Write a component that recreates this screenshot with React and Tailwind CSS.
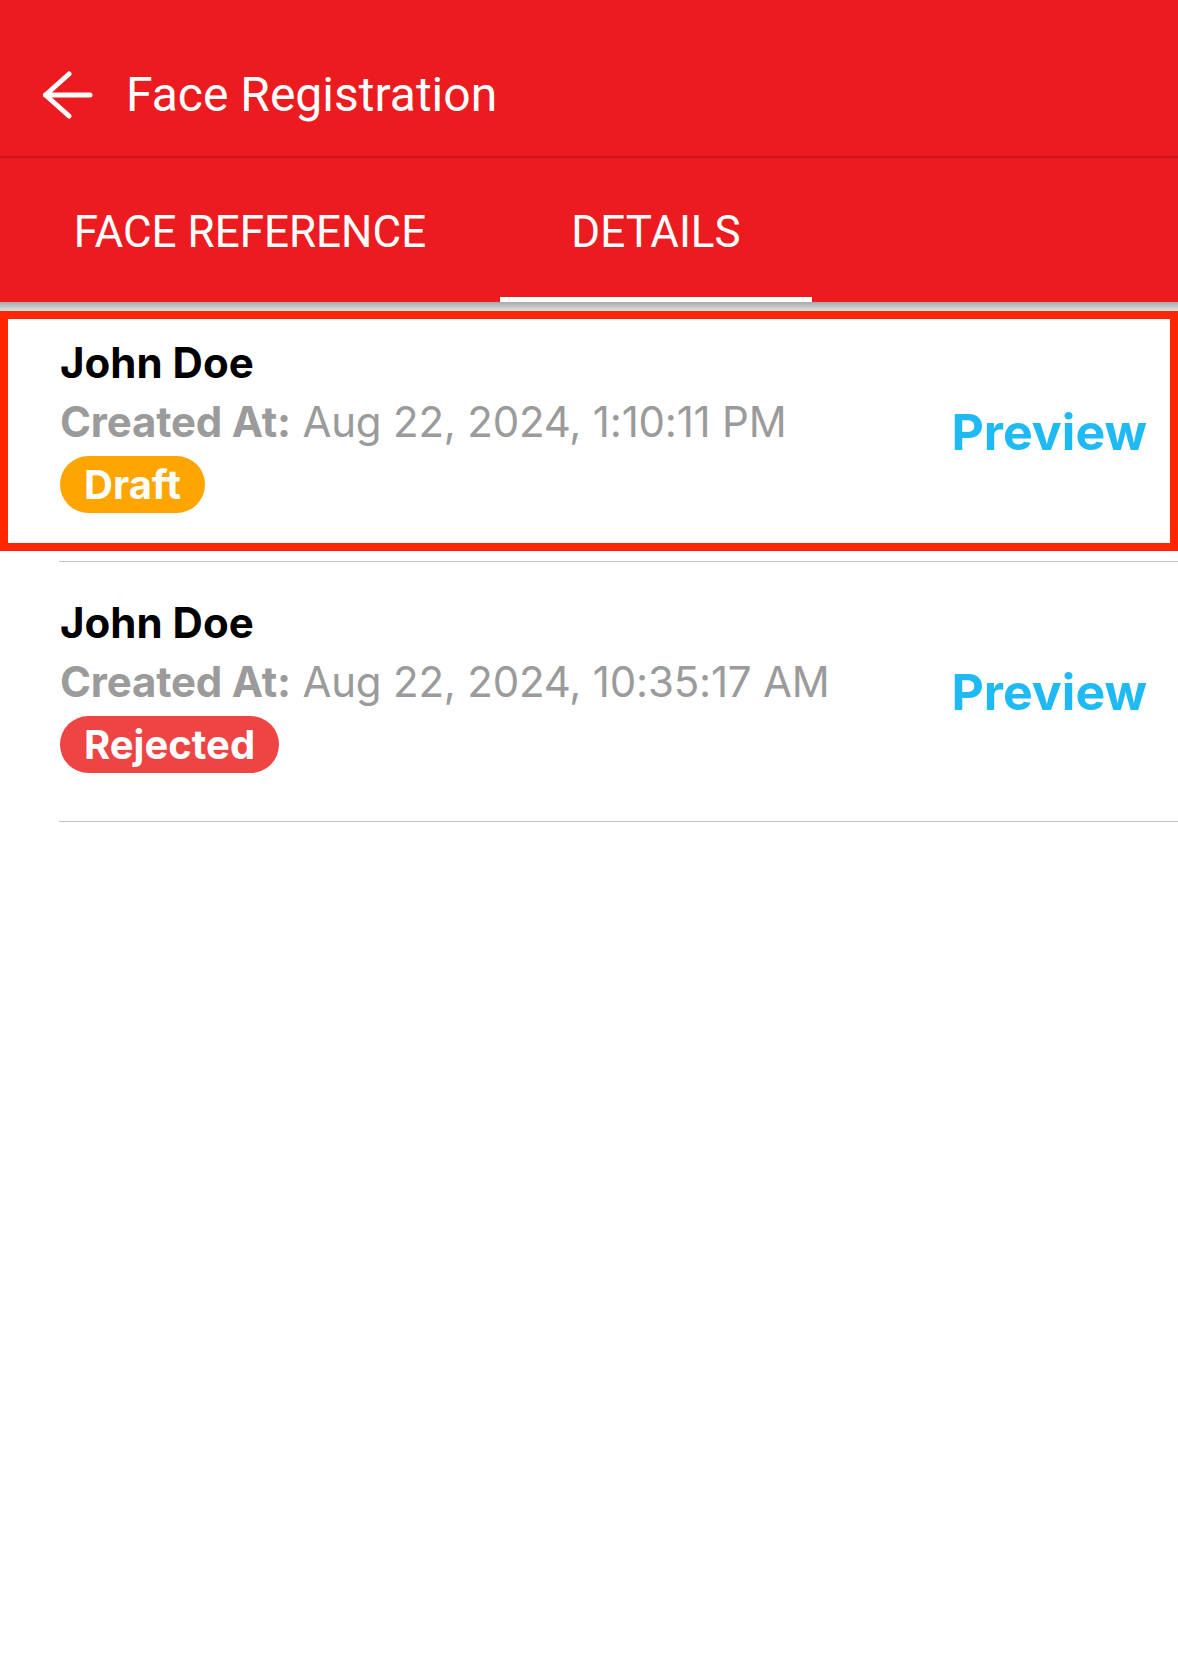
import React from "react";

const items = [
  { id: 1, name: "John Doe", createdAt: "Aug 22, 2024, 1:10:11 PM", status: "Draft", highlighted: true },
  { id: 2, name: "John Doe", createdAt: "Aug 22, 2024, 10:35:17 AM", status: "Rejected" },
];

function BackArrow() {
  return (
    <svg width="52" height="48" viewBox="0 0 52 48" fill="none" stroke="white" strokeWidth="5" strokeLinecap="round" strokeLinejoin="round">
      <path d="M3.5 24H48" />
      <path d="M27 3L3.5 24L27 45" />
    </svg>
  );
}

function StatusBadge({ status }) {
  const color = status === "Draft" ? "bg-[#ffa500]" : "bg-[#ef4444]";
  return (
    <span className={`inline-flex h-[57px] items-center rounded-full px-[24px] text-[40px] font-bold text-white ${color}`}>
      {status}
    </span>
  );
}

function Row({ item }) {
  return (
    <>
      <div className="relative flex items-center pl-[60px] pr-[31px] pt-[35px] pb-[48px]">
        <div className="flex-1">
          <div className="text-[42px] font-bold leading-[52px] text-black">{item.name}</div>
          <div className="mt-[7px] text-[42px] tracking-[-0.2px] leading-[52px] text-[#9b9b9b]">
            <span className="font-bold">Created At:</span> {item.createdAt}
          </div>
          <div className="mt-[8px] flex">
            <StatusBadge status={item.status} />
          </div>
        </div>
        <button className="mt-[15px] text-[50px] font-bold text-[#1fbaf3]">Preview</button>
        {item.highlighted && (
          <div className="pointer-events-none absolute inset-x-0 top-[9px] bottom-[10px] border-[8px] border-[#ff2600]" />
        )}
      </div>
      <div className="ml-[59px] h-px bg-[#c6c6c6]" />
    </>
  );
}

export default function App() {
  return (
    <div className="min-h-[1674px] w-[1178px] bg-white font-['Inter',sans-serif]">
      <header className="relative bg-[#ec1b1f] font-['Roboto',sans-serif] text-white">
        <div className="flex h-[158px] items-center border-b-2 border-[#c9161b] pl-[42px] pt-[34px]">
          <BackArrow />
          <h1 className="ml-[32px] text-[48px] leading-none">Face Registration</h1>
        </div>
        <div className="flex h-[144px] pt-[8px]">
          <div className="flex w-[500px] items-center justify-center border-b-[5px] border-transparent text-[44px]">
            FACE REFERENCE
          </div>
          <div className="flex w-[312px] items-center justify-center border-b-[5px] border-white text-[44px]">
            DETAILS
          </div>
        </div>
        <div className="absolute inset-x-0 top-full z-10 h-[9px] bg-gradient-to-b from-[#a9a9a9] to-[#e2e2e2]" />
      </header>
      <main>
        {items.map((item) => (
          <Row key={item.id} item={item} />
        ))}
      </main>
    </div>
  );
}
